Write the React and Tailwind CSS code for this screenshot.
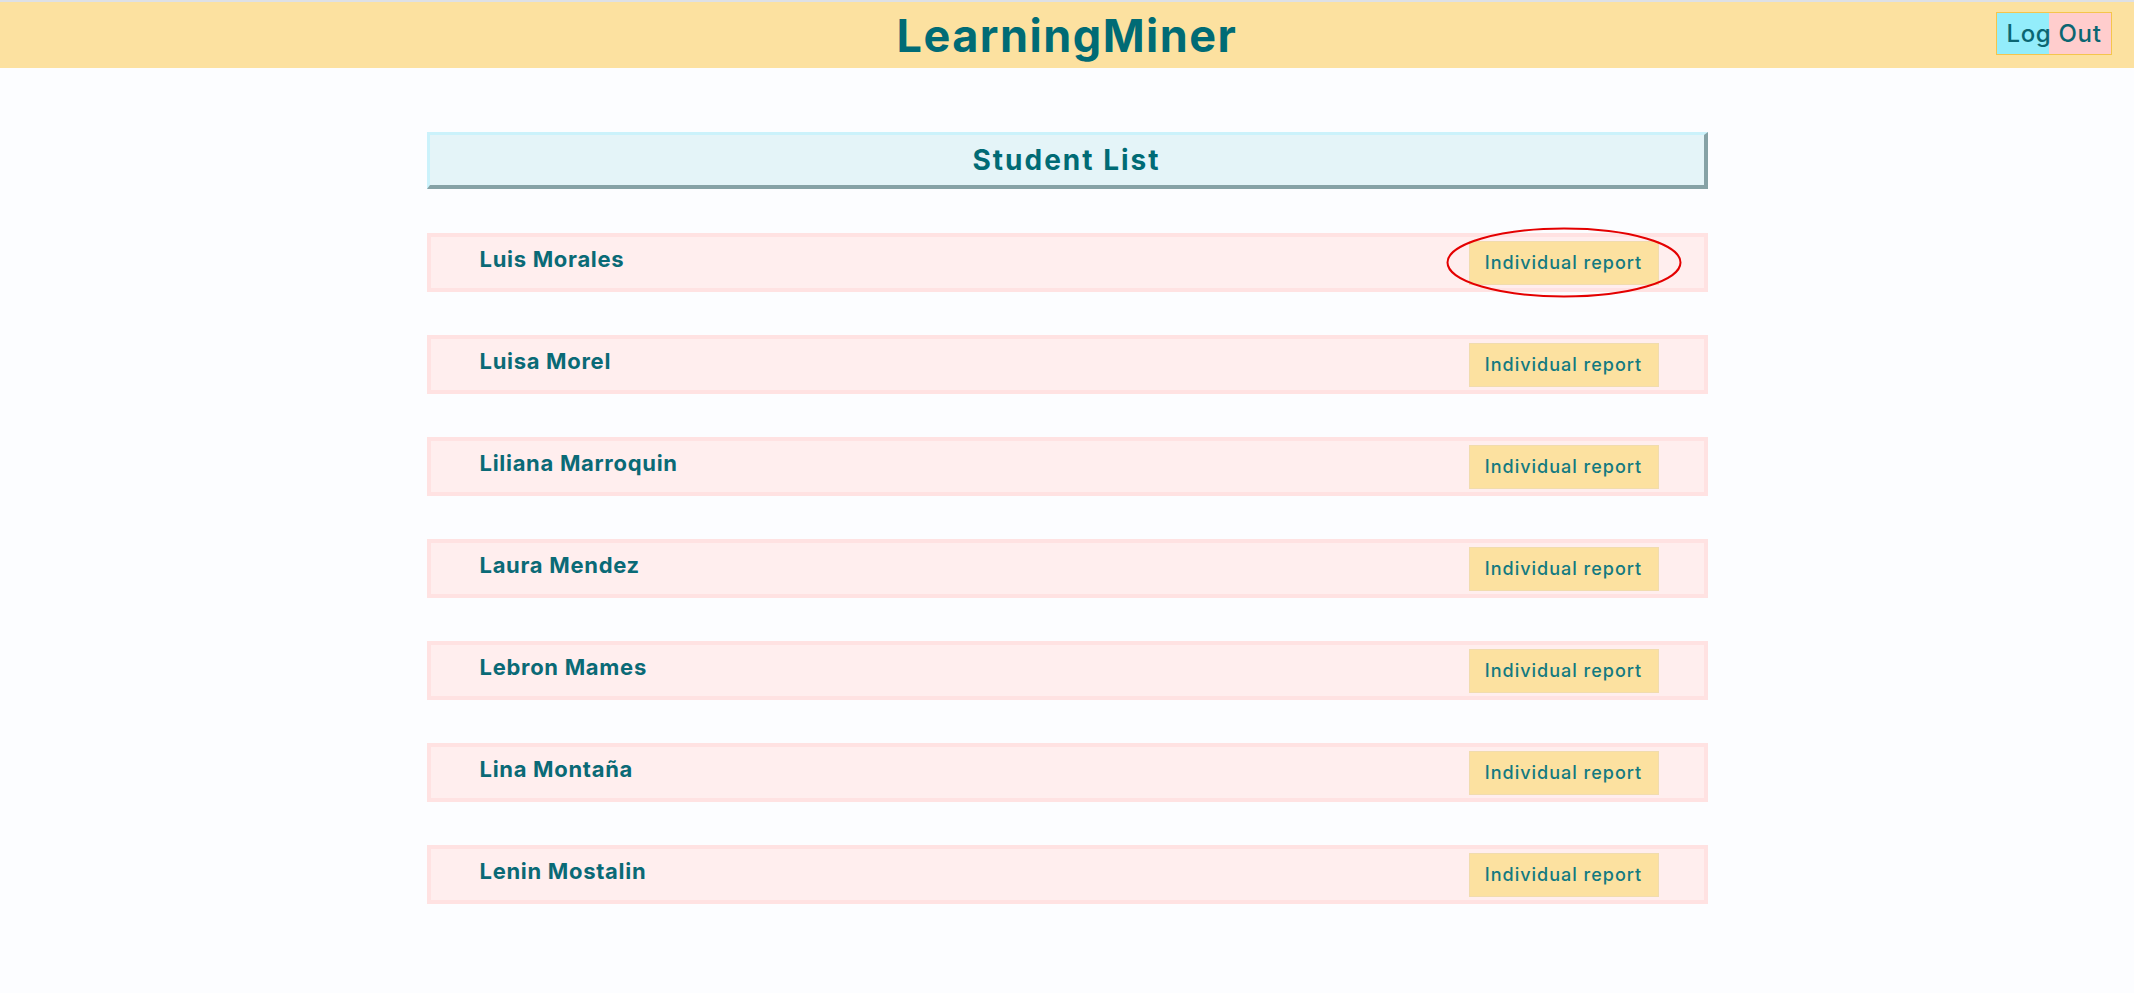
import React from 'react';

const students = [
  'Luis Morales',
  'Luisa Morel',
  'Liliana Marroquin',
  'Laura Mendez',
  'Lebron Mames',
  'Lina Montaña',
  'Lenin Mostalin',
];

function ReportButton({ circled }) {
  return (
    <div className="relative">
      <button className="h-[44px] w-[190px] bg-[#fce1a0] border border-[#f1dcae] text-[18px] font-medium tracking-[1px] text-[#137a80]">
        Individual report
      </button>
      {circled && (
        <svg
          className="absolute -left-[23px] -top-[14px] w-[236px] h-[71px] pointer-events-none"
          viewBox="0 0 236 71"
          fill="none"
        >
          <ellipse cx="118" cy="35.5" rx="116.5" ry="34" stroke="#e40000" strokeWidth="2" />
        </svg>
      )}
    </div>
  );
}

export default function App() {
  return (
    <div className="min-h-screen bg-[#fcfdff] font-['Inter',sans-serif]">
      <header className="h-[68px] border-t-2 border-[#dde0e6] bg-[#fce1a0] flex items-center justify-center relative">
        <h1 className="text-[45px] font-bold text-[#006b75] tracking-[1.5px] leading-none">
          LearningMiner
        </h1>
        <button className="absolute right-[22px] top-[10px] h-[43px] w-[116px] border border-[#f5c54c] bg-[linear-gradient(to_right,#93edfb_0%,#93edfb_46%,#ffcdcd_46%,#ffcdcd_100%)] text-[24px] font-medium tracking-[0.7px] text-[#0b6672] leading-none">
          Log Out
        </button>
      </header>

      <main className="w-[1281px] mx-auto pt-[64px]">
        <div className="h-[57px] bg-[#e4f4f8] border-t-[3px] border-l-[3px] border-r-4 border-b-4 border-t-[#cbf2fb] border-l-[#cbf2fb] border-r-[#86a2a6] border-b-[#86a2a6] flex items-center justify-center">
          <h2 className="text-[28px] font-bold tracking-[2px] text-[#006b75]">Student List</h2>
        </div>

        <ul className="mt-[44px] flex flex-col gap-[43px]">
          {students.map((name, i) => (
            <li
              key={name}
              className="h-[59px] border-4 border-[#ffe2e2] bg-[#ffeeee] flex items-center justify-between pl-[49px] pr-[45px]"
            >
              <span className="text-[22px] font-bold tracking-[0.7px] text-[#0a6a76] pb-[6px]">{name}</span>
              <ReportButton circled={i === 0} />
            </li>
          ))}
        </ul>
      </main>
    </div>
  );
}
